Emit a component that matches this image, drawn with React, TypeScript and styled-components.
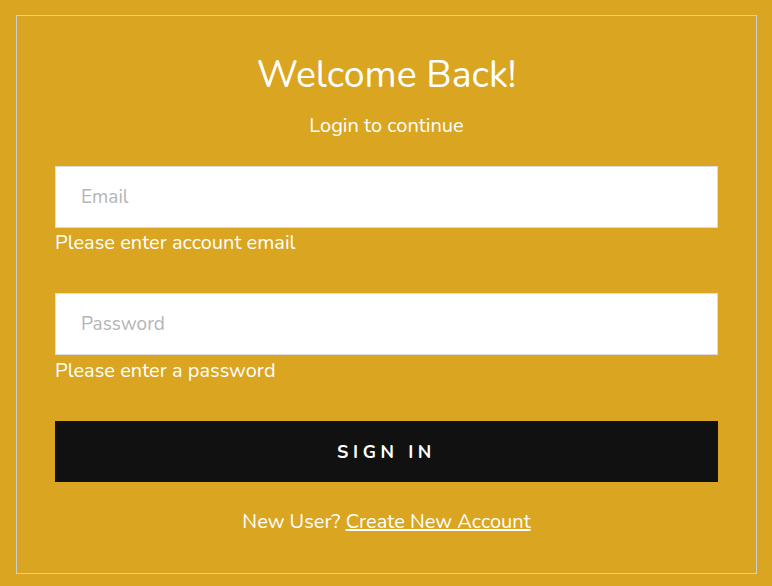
import React from "react";
import styled, { createGlobalStyle } from "styled-components";

const Global = createGlobalStyle`
  html, body {
    margin: 0;
    padding: 0;
    background: #daa520;
  }
  body {
    font-family: "Nunito", "Lato", "Open Sans", sans-serif;
    color: #fff;
  }
`;

const Page = styled.div`
  padding: 15px 16px 12px 16px;
`;

const Card = styled.div`
  box-sizing: border-box;
  width: 741px;
  height: 559px;
  border: 1px solid #cfcfcf;
  padding: 36px 38px 0 38px;
  display: flex;
  flex-direction: column;
`;

const Title = styled.h1`
  margin: 0;
  font-size: 37.5px;
  font-weight: 400;
  line-height: 46px;
  text-align: center;
`;

const Subtitle = styled.p`
  margin: 16px 0 0 0;
  font-size: 20px;
  line-height: 24px;
  text-align: center;
`;

const Form = styled.form`
  display: flex;
  flex-direction: column;
  margin-top: 28px;
`;

const Field = styled.div<{ $gap?: number }>`
  display: flex;
  flex-direction: column;
  margin-bottom: ${(p) => p.$gap ?? 39}px;
`;

const Input = styled.input`
  box-sizing: border-box;
  width: 100%;
  height: 62px;
  border: 1px solid #dcdcdc;
  background: #fff;
  padding: 0 25px;
  font-family: inherit;
  font-size: 19px;
  color: #333;
  outline: none;
  &::placeholder {
    color: #b5b5b5;
  }
`;

const Hint = styled.span<{ $shift?: number }>`
  font-size: 20px;
  line-height: 24px;
  margin-top: ${(p) => 3 + (p.$shift ?? 0)}px;
`;

const Button = styled.button`
  box-sizing: border-box;
  width: 100%;
  height: 61px;
  border: none;
  background: #111111;
  color: #fff;
  font-family: inherit;
  font-size: 18px;
  font-weight: 700;
  letter-spacing: 4.6px;
  text-transform: uppercase;
  cursor: pointer;
`;

const Footer = styled.p`
  margin: 28px 0 0 0;
  font-size: 20px;
  line-height: 24px;
  text-align: center;
`;

const Link = styled.a`
  color: #fff;
  text-decoration: underline;
`;

export default function App() {
  return (
    <>
      <Global />
      <Page>
        <Card>
          <Title>Welcome Back!</Title>
          <Subtitle>Login to continue</Subtitle>
          <Form onSubmit={(e) => e.preventDefault()}>
            <Field $gap={38}>
              <Input type="email" placeholder="Email" />
              <Hint>Please enter account email</Hint>
            </Field>
            <Field $gap={38}>
              <Input type="password" placeholder="Password" />
              <Hint $shift={1}>Please enter a password</Hint>
            </Field>
            <Button type="submit">Sign In</Button>
          </Form>
          <Footer>
            New User? <Link href="#">Create New Account</Link>
          </Footer>
        </Card>
      </Page>
    </>
  );
}
